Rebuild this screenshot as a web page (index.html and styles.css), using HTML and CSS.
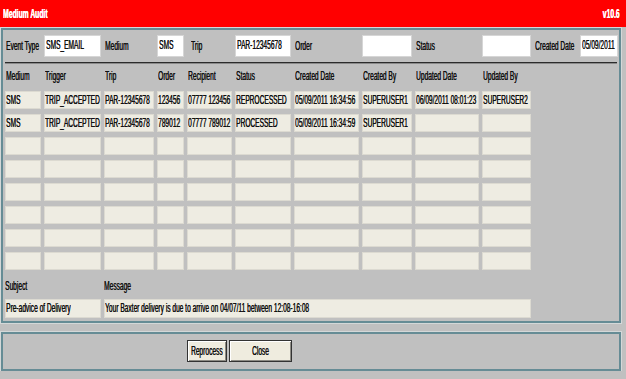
FILE: index.html
```html
<!DOCTYPE html>
<html lang="en">
<head>
    <meta charset="UTF-8">
    <meta name="viewport" content="width=device-width, initial-scale=1.0">
    <title>Medium Audit</title>
    <link rel="stylesheet" href="styles.css">
</head>
<body>
    <div class="titlebar">
        <span class="t">Medium Audit</span>
        <span class="t t-right">v10.6</span>
    </div>

    <div class="panel main">
        <!-- search filters -->
        <div class="filters">
            <div class="label"><span class="t">Event Type</span></div>
            <div class="field"><span class="t">SMS_EMAIL</span></div>
            <div class="label"><span class="t">Medium</span></div>
            <div class="field"><span class="t">SMS</span></div>
            <div class="label trip"><span class="t">Trip</span></div>
            <div class="field"><span class="t">PAR-12345678</span></div>
            <div class="label"><span class="t">Order</span></div>
            <div class="field"></div>
            <div class="label"><span class="t">Status</span></div>
            <div class="field"></div>
            <div class="label"><span class="t">Created Date</span></div>
            <div class="field"><span class="t">05/09/2011</span></div>
        </div>

        <div class="rule"></div>

        <div class="grid head">
            <div><span class="t">Medium</span></div>
            <div><span class="t">Trigger</span></div>
            <div><span class="t">Trip</span></div>
            <div><span class="t">Order</span></div>
            <div><span class="t">Recipient</span></div>
            <div><span class="t">Status</span></div>
            <div><span class="t">Created Date</span></div>
            <div><span class="t">Created By</span></div>
            <div><span class="t">Updated Date</span></div>
            <div><span class="t">Updated By</span></div>
        </div>

        <div class="grid rows">
            <div class="cell"><span class="t">SMS</span></div>
            <div class="cell"><span class="t">TRIP_ACCEPTED</span></div>
            <div class="cell"><span class="t">PAR-12345678</span></div>
            <div class="cell"><span class="t">123456</span></div>
            <div class="cell"><span class="t">07777 123456</span></div>
            <div class="cell"><span class="t">REPROCESSED</span></div>
            <div class="cell"><span class="t">05/09/2011 16:34:56</span></div>
            <div class="cell"><span class="t">SUPERUSER1</span></div>
            <div class="cell"><span class="t">06/09/2011 08:01:23</span></div>
            <div class="cell"><span class="t">SUPERUSER2</span></div>

            <div class="cell"><span class="t">SMS</span></div>
            <div class="cell"><span class="t">TRIP_ACCEPTED</span></div>
            <div class="cell"><span class="t">PAR-12345678</span></div>
            <div class="cell"><span class="t">789012</span></div>
            <div class="cell"><span class="t">07777 789012</span></div>
            <div class="cell"><span class="t">PROCESSED</span></div>
            <div class="cell"><span class="t">05/09/2011 16:34:59</span></div>
            <div class="cell"><span class="t">SUPERUSER1</span></div>
            <div class="cell"></div>
            <div class="cell"></div>

            <div class="cell"></div><div class="cell"></div><div class="cell"></div><div class="cell"></div><div class="cell"></div>
            <div class="cell"></div><div class="cell"></div><div class="cell"></div><div class="cell"></div><div class="cell"></div>

            <div class="cell"></div><div class="cell"></div><div class="cell"></div><div class="cell"></div><div class="cell"></div>
            <div class="cell"></div><div class="cell"></div><div class="cell"></div><div class="cell"></div><div class="cell"></div>

            <div class="cell"></div><div class="cell"></div><div class="cell"></div><div class="cell"></div><div class="cell"></div>
            <div class="cell"></div><div class="cell"></div><div class="cell"></div><div class="cell"></div><div class="cell"></div>

            <div class="cell"></div><div class="cell"></div><div class="cell"></div><div class="cell"></div><div class="cell"></div>
            <div class="cell"></div><div class="cell"></div><div class="cell"></div><div class="cell"></div><div class="cell"></div>

            <div class="cell"></div><div class="cell"></div><div class="cell"></div><div class="cell"></div><div class="cell"></div>
            <div class="cell"></div><div class="cell"></div><div class="cell"></div><div class="cell"></div><div class="cell"></div>

            <div class="cell"></div><div class="cell"></div><div class="cell"></div><div class="cell"></div><div class="cell"></div>
            <div class="cell"></div><div class="cell"></div><div class="cell"></div><div class="cell"></div><div class="cell"></div>
        </div>

        <!-- message detail -->
        <div class="grid msg-head">
            <div class="subject"><span class="t">Subject</span></div>
            <div class="message"><span class="t">Message</span></div>
        </div>
        <div class="grid msg-row">
            <div class="cell subject"><span class="t">Pre-advice of Delivery</span></div>
            <div class="cell message"><span class="t">Your Baxter delivery is due to arrive on 04/07/11 between 12:08-16:08</span></div>
        </div>
    </div>

    <div class="panel actions">
        <button class="btn reprocess"><span class="t">Reprocess</span></button>
        <button class="btn close"><span class="t">Close</span></button>
    </div>
</body>
</html>
```

FILE: styles.css
```css
*{
    box-sizing: border-box;
}
body{
    margin: 0;
    background: #c0c0c0;
    color: #111;
    font-family: "Liberation Sans", Arial, sans-serif;
    font-size: 12px;
}

/* the old app draws its text squeezed sideways */
.t{
    display: inline-block;
    white-space: nowrap;
    transform: scaleX(.55);
    transform-origin: 0 50%;
    text-shadow: .5px 0 0 currentColor;
}

.titlebar{
    display: flex;
    justify-content: space-between;
    align-items: center;
    height: 27px;
    padding: 0 0 1px 3px;
    background: #ff0000;
    color: white;
    font-weight: bold;
    font-size: 13px;
}
.titlebar .t{
    transform: scaleX(.52);
}
.titlebar .t-right{
    transform-origin: 100% 50%;
    margin-right: 6px;
}

.panel{
    width: 620px;
    margin-left: 1px;
    border: 2px solid #668c95;
    box-shadow: 0 0 0 1px #d4d8d8;
    background: #c0c0c0;
}
.main{
    margin-top: 1px;
    padding: 5px 0 4px 2px;
}

.filters, .grid{
    display: grid;
    grid-template-columns: 36px 57px 50px 27px 45px 56px 65px 50px 64px 49px;
    column-gap: 3px;
}
.filters{
    grid-template-columns: 36px 57px 50px 27px 45px 56px 65px 50px 64px 49px 43px 38px;
    height: 20px;
}
.label{
    line-height: 22px;
    padding-left: 1px;
}
.label.trip{
    padding-left: 4px;
}
.field{
    background: white;
    border: 1px solid #d6d6d6;
    line-height: 19px;
    padding-left: 1px;
}

.rule{
    height: 2px;
    margin: 7px 2px 0 0;
    background: #2b2b2b;
    border-bottom: 1px solid #8a8a8a;
}

.head{
    height: 24px;
    line-height: 24px;
    margin-bottom: 3px;
}
.head div{
    padding-left: 1px;
}

.rows{
    grid-auto-rows: 18px;
    row-gap: 5px;
}
.cell{
    background: #eeece2;
    border: 1px solid #dcdad1;
    line-height: 17px;
}

.msg-head{
    height: 20px;
    line-height: 20px;
    margin-top: 6px;
    margin-bottom: 3px;
}
.msg-row{
    height: 18px;
}
.subject{
    grid-column: 1 / 3;
}
.message{
    grid-column: 3 / 11;
}

.actions{
    display: flex;
    gap: 2px;
    margin-top: 9px;
    padding: 6px 0 7px 184px;
}
.btn{
    display: flex;
    justify-content: center;
    align-items: center;
    height: 22px;
    padding: 0;
    background: #efecdf;
    border: 1px solid #333;
    box-shadow: inset 1px 1px #ffffff, inset -1px -1px #8d8b84;
    font-family: inherit;
    font-size: inherit;
    color: #111;
}
.btn .t{
    transform-origin: 50% 50%;
}
.reprocess{
    width: 40px;
}
.close{
    width: 63px;
}
```
